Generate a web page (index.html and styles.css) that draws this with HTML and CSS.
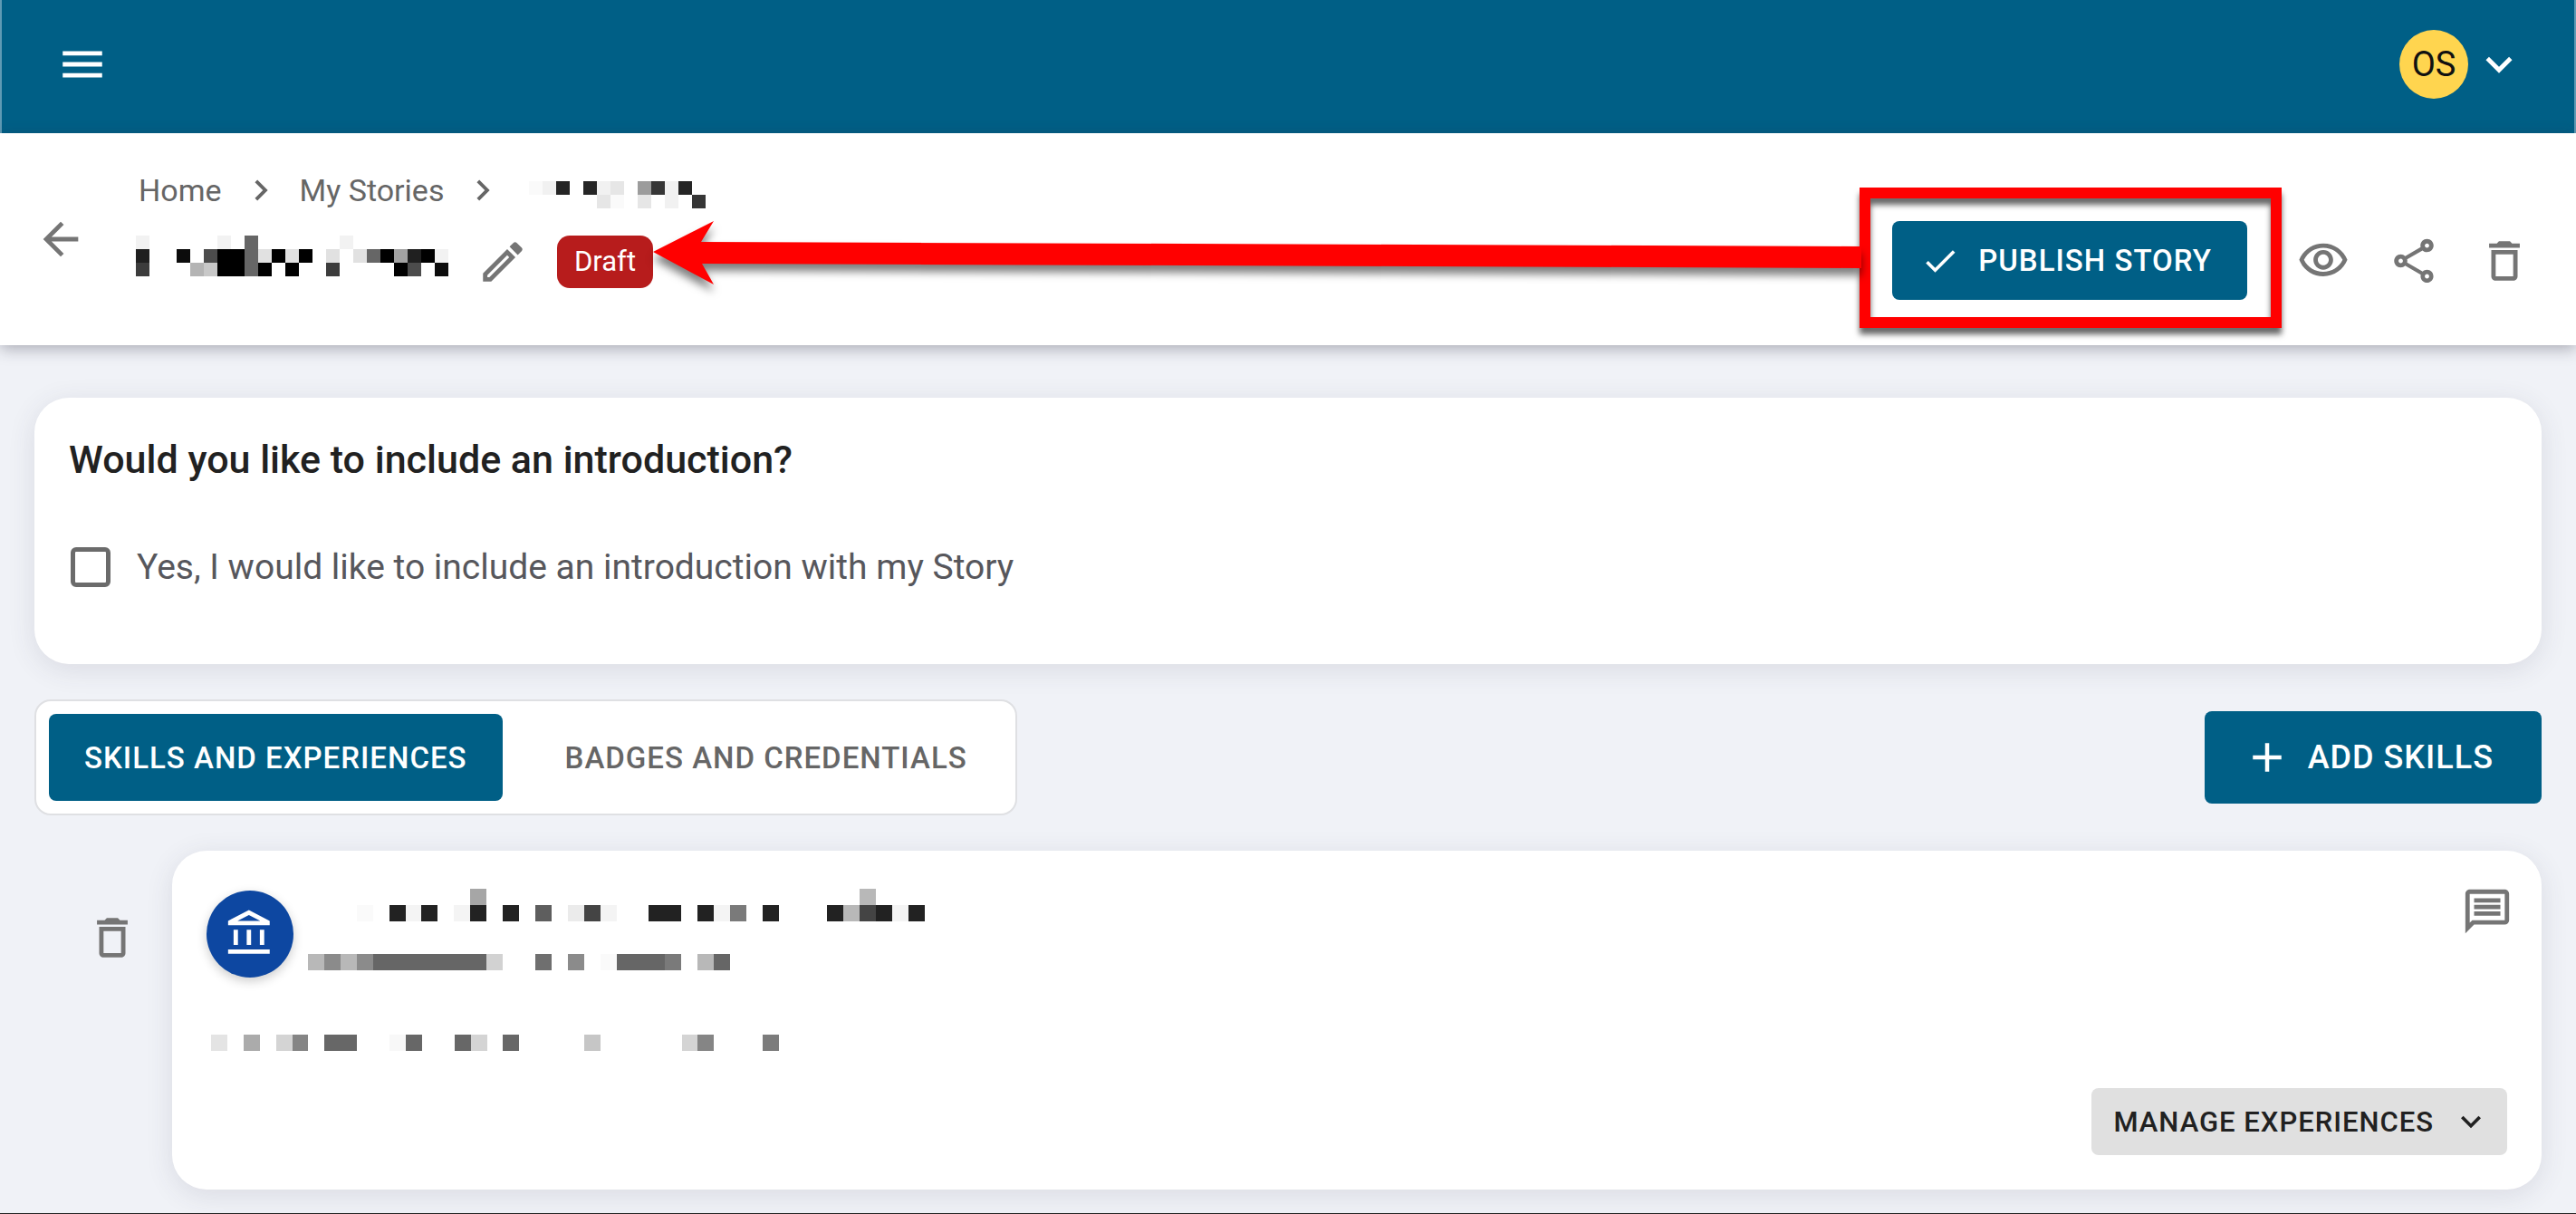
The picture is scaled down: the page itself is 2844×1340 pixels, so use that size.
FILE: index.html
```html
<!doctype html>
<html lang="en">
<head>
	<meta charset="utf-8"/>
	<title>My Stories</title>
	<link rel="stylesheet" href="styles.css">
</head>
<body>
<div class="page">
	<header class="topbar">
		<button class="icon-btn" aria-label="Menu">
			<svg class="icon" viewBox="0 0 24 24"><path d="M3 18h18v-2H3v2zm0-5h18v-2H3v2zm0-7v2h18V6H3z"/></svg>
		</button>
		<button class="account" aria-label="Account">
			<span class="avatar">OS</span>
			<svg class="icon" viewBox="0 0 24 24"><path d="M16.59 8.59 12 13.17 7.41 8.59 6 10l6 6 6-6z"/></svg>
		</button>
	</header>

	<section class="toolbar">
		<button class="icon-btn" aria-label="Back">
			<svg class="icon" viewBox="0 0 24 24"><path d="M20 11H7.83l5.59-5.59L12 4l-8 8 8 8 1.41-1.41L7.83 13H20v-2z"/></svg>
		</button>
		<div class="heading">
			<nav class="crumbs">
				<a href="#">Home</a>
				<svg class="icon-crumb" viewBox="0 0 24 24"><path d="M10 6 8.59 7.41 13.17 12l-4.58 4.59L10 18l6-6z"/></svg>
				<a href="#">My Stories</a>
				<svg class="icon-crumb" viewBox="0 0 24 24"><path d="M10 6 8.59 7.41 13.17 12l-4.58 4.59L10 18l6-6z"/></svg>
				<svg class="hidden-crumb" viewBox="0 0 13 2" shape-rendering="crispEdges">
					<path fill="#fafafa" d="M0 0h1v1H0zM6 1h1v1H6z"/>
					<path fill="#f1f1f1" d="M1 0h1v1H1zM5 0h1v1H5zM10 0h1v1h-1zM10 1h1v1h-1z"/>
					<path fill="#e6e6e6" d="M6 0h1v1H6zM5 1h1v1H5zM8 1h1v1H8z"/>
					<path fill="#9c9c9c" d="M8 0h1v1H8z"/>
					<path fill="#363636" d="M9 0h1v1H9zM12 1h1v1h-1z"/>
					<path fill="#252525" d="M2 0h1v1H2zM4 0h1v1H4zM11 0h1v1h-1z"/>
				</svg>
			</nav>
			<div class="title-row">
				<svg class="hidden-title" viewBox="0 0 23 3" shape-rendering="crispEdges">
					<path fill="#f2f2f2" d="M0 0h1v1H0zM6 0h1v1H6zM15 0h1v1h-1zM22 1h1v1h-1z"/>
					<path fill="#e1e1e1" d="M9 1h1v1H9zM11 1h1v1h-1zM14 1h1v1h-1zM16 1h1v1h-1z"/>
					<path fill="#c8c8c8" d="M5 2h1v1H5z"/>
					<path fill="#b4b4b4" d="M4 2h1v1H4z"/>
					<path fill="#a2a2a2" d="M19 1h1v1h-1z"/>
					<path fill="#666" d="M8 0h1v3H8zM17 1h1v1h-1z"/>
					<path fill="#4c4c4c" d="M5 1h1v1H5zM20 2h1v1h-1z"/>
					<path fill="#3c3c3c" d="M0 2h1v1H0zM14 2h1v1h-1z"/>
					<path fill="#202020" d="M0 1h1v1H0zM20 1h1v1h-1z"/>
					<path fill="#0c0c0c" d="M3 1h1v1H3zM22 2h1v1h-1z"/>
					<path fill="#000" d="M6 1h2v2H6zM10 1h1v1h-1zM12 1h1v1h-1zM9 2h1v1H9zM11 2h1v1h-1zM18 1h1v1h-1zM21 1h1v1h-1zM19 2h1v1h-1z"/>
				</svg>
				<button class="icon-btn" aria-label="Edit title">
					<svg class="icon" viewBox="0 0 24 24"><path d="M3 17.25V21h3.75L17.81 9.94l-3.75-3.75L3 17.25zM5.92 19H5v-.92l9.06-9.06.92.92L5.92 19zM20.71 5.63l-2.34-2.34c-.2-.2-.45-.29-.71-.29s-.51.1-.7.29l-1.83 1.83 3.75 3.75 1.83-1.83c.39-.39.39-1.02 0-1.41z"/></svg>
				</button>
				<span class="badge">Draft</span>
			</div>
		</div>
		<div class="actions">
			<div class="publish">
				<button class="btn btn-publish">
					<svg class="icon-small" viewBox="0 0 24 24"><path d="M9 16.17 4.83 12l-1.42 1.41L9 19 21 7l-1.41-1.41z"/></svg>
					PUBLISH STORY
				</button>
				<div class="frame"></div>
				<svg class="arrow" viewBox="0 0 1334 70"><path fill="#f00" d="M0 34 67 0 53 23 1334 28V52L54 47 67 70z"/></svg>
			</div>
			<button class="icon-btn" aria-label="Preview">
				<svg class="icon" viewBox="0 0 24 24"><path d="M12 6c3.79 0 7.17 2.13 8.82 5.5C19.17 14.87 15.79 17 12 17s-7.17-2.13-8.82-5.5C4.83 8.13 8.21 6 12 6m0-2C7 4 2.73 7.11 1 11.5 2.73 15.89 7 19 12 19s9.27-3.11 11-7.5C21.27 7.11 17 4 12 4zm0 5c1.38 0 2.5 1.12 2.5 2.5S13.38 14 12 14s-2.5-1.12-2.5-2.5S10.62 9 12 9m0-2c-2.48 0-4.5 2.02-4.5 4.5S9.52 16 12 16s4.5-2.02 4.5-4.5S14.48 7 12 7z"/></svg>
			</button>
			<button class="icon-btn" aria-label="Share">
				<svg class="icon" viewBox="0 0 24 24"><path d="M18 16.08c-.76 0-1.44.3-1.96.77L8.91 12.7c.05-.23.09-.46.09-.7s-.04-.47-.09-.7l7.05-4.11c.54.5 1.25.81 2.04.81 1.66 0 3-1.34 3-3s-1.34-3-3-3-3 1.34-3 3c0 .24.04.47.09.7L8.04 9.81C7.5 9.31 6.79 9 6 9c-1.66 0-3 1.34-3 3s1.34 3 3 3c.79 0 1.5-.31 2.04-.81l7.12 4.16c-.05.21-.08.43-.08.65 0 1.61 1.31 2.92 2.92 2.92s2.92-1.31 2.92-2.92-1.31-2.92-2.92-2.92zM18 4c.55 0 1 .45 1 1s-.45 1-1 1-1-.45-1-1 .45-1 1-1zM6 13c-.55 0-1-.45-1-1s.45-1 1-1 1 .45 1 1-.45 1-1 1zm12 7.02c-.55 0-1-.45-1-1s.45-1 1-1 1 .45 1 1-.45 1-1 1z"/></svg>
			</button>
			<button class="icon-btn" aria-label="Delete story">
				<svg class="icon" viewBox="0 0 24 24"><path d="M6 19c0 1.1.9 2 2 2h8c1.1 0 2-.9 2-2V7H6v12zM8 9h8v10H8V9zm7.5-5-1-1h-5l-1 1H5v2h14V4z"/></svg>
			</button>
		</div>
	</section>

	<main class="content">
		<section class="card intro">
			<h2>Would you like to include an introduction?</h2>
			<label class="check">
				<input type="checkbox">
				<span>Yes, I would like to include an introduction with my Story</span>
			</label>
		</section>

		<div class="tab-row">
			<div class="tabs">
				<button class="tab active">SKILLS AND EXPERIENCES</button>
				<button class="tab">BADGES AND CREDENTIALS</button>
			</div>
			<button class="btn btn-add">
				<svg class="icon-plus" viewBox="0 0 24 24"><path d="M19 13h-6v6h-2v-6H5v-2h6V5h2v6h6v2z"/></svg>
				ADD SKILLS
			</button>
		</div>

		<div class="skill-row">
			<button class="icon-btn" aria-label="Delete skill">
				<svg class="icon" viewBox="0 0 24 24"><path d="M6 19c0 1.1.9 2 2 2h8c1.1 0 2-.9 2-2V7H6v12zM8 9h8v10H8V9zm7.5-5-1-1h-5l-1 1H5v2h14V4z"/></svg>
			</button>
			<article class="card skill">
				<div class="skill-head">
					<span class="skill-icon">
						<svg class="icon" viewBox="0 0 24 24"><path d="M6.5 10h-2v7h2v-7zm6 0h-2v7h2v-7zm8.5 9H2v2h19v-2zm-2.5-9h-2v7h2v-7zm-7-6.74L16.71 6H6.29l5.21-2.74m0-2.26L2 6v2h19V6l-9.5-5z"/></svg>
					</span>
					<div class="skill-text">
						<svg class="hidden-name" viewBox="6 0 38 5" preserveAspectRatio="none" shape-rendering="crispEdges">
							<path fill="#f4f4f4" d="M12 1h1v1h-1zM15 1h1v1h-1zM24 1h1v1h-1zM31 1h1v1h-1zM42 1h1v1h-1z"/>
							<path fill="#fafafa" d="M9 1h1v1H9zM24 4h1v1h-1z"/>
							<path fill="#ebebeb" d="M22 1h1v1h-1z"/>
							<path fill="#d2d2d2" d="M17 4h1v1h-1z"/>
							<path fill="#b8b8b8" d="M40 0h1v1h-1zM39 1h1v1h-1zM6 4h1v1H6zM8 4h1v1H8zM30 4h1v1h-1z"/>
							<path fill="#a6a6a6" d="M16 0h1v1h-1z"/>
							<path fill="#8b8b8b" d="M7 4h1v1H7zM9 4h1v1H9zM22 4h1v1h-1z"/>
							<path fill="#7a7a7a" d="M32 1h1v1h-1zM28 4h1v1h-1z"/>
							<path fill="#6f6f6f" d="M20 4h1v1h-1z"/>
							<path fill="#666" d="M10 4h7v1h-7zM25 4h3v1h-3zM31 4h1v1h-1z"/>
							<path fill="#5e5e5e" d="M20 1h1v1h-1z"/>
							<path fill="#444" d="M23 1h1v1h-1zM40 1h1v1h-1z"/>
							<path fill="#222" d="M11 1h1v1h-1zM13 1h1v1h-1zM16 1h1v1h-1zM18 1h1v1h-1zM27 1h2v1h-2zM30 1h1v1h-1zM34 1h1v1h-1zM38 1h1v1h-1zM41 1h1v1h-1zM43 1h1v1h-1z"/>
						</svg>
					</div>
					<button class="icon-btn" aria-label="Comment">
						<svg class="icon" viewBox="0 0 24 24"><path d="M4 4h16v12H5.17L4 17.17V4m0-2c-1.1 0-1.99.9-1.99 2L2 22l4-4h14c1.1 0 2-.9 2-2V4c0-1.100-.9-2-2-2H4zm2 10h12v2H6v-2zm0-3h12v2H6V9zm0-3h12v2H6V6z"/></svg>
					</button>
				</div>
				<svg class="hidden-note" viewBox="0 0 35 1" preserveAspectRatio="none" shape-rendering="crispEdges">
					<path fill="#f8f8f8" d="M11 0h1v1h-1z"/>
					<path fill="#e4e4e4" d="M0 0h1v1H0z"/>
					<path fill="#d4d4d4" d="M4 0h1v1H4zM16 0h1v1h-1zM29 0h1v1h-1z"/>
					<path fill="#c6c6c6" d="M23 0h1v1h-1z"/>
					<path fill="#ababab" d="M2 0h1v1H2z"/>
					<path fill="#858585" d="M5 0h1v1H5zM30 0h1v1h-1z"/>
					<path fill="#7c7c7c" d="M34 0h1v1h-1z"/>
					<path fill="#676767" d="M7 0h2v1H7zM12 0h1v1h-1zM15 0h1v1h-1zM18 0h1v1h-1z"/>
				</svg>
				<button class="btn btn-manage">
					MANAGE EXPERIENCES
					<svg class="icon-small" viewBox="0 0 24 24"><path d="M16.59 8.59 12 13.17 7.41 8.59 6 10l6 6 6-6z"/></svg>
				</button>
			</article>
		</div>
	</main>
</div>
</body>
</html>
```
FILE: styles.css
```css
* {
	box-sizing: border-box;
}
body {
	margin: 0;
	background-color: #f0f2f7;
	font-family: Roboto, "Liberation Sans", sans-serif;
	color: #212121;
}
button {
	font-family: inherit;
	border: none;
	background: none;
	padding: 0;
	cursor: pointer;
}
svg {
	display: block;
	fill: currentColor;
	flex-shrink: 0;
}
.page {
	min-height: 100vh;
	border-bottom: 1px solid #222;
}
.icon {
	width: 58px;
	height: 58px;
}
.icon-small {
	width: 44px;
	height: 44px;
}
.icon-crumb {
	width: 46px;
	height: 46px;
}
.icon-plus {
	width: 54px;
	height: 54px;
}
.icon-btn {
	color: #757575;
	flex-shrink: 0;
}

/* top bar */
.topbar {
	display: flex;
	justify-content: space-between;
	align-items: center;
	height: 147px;
	padding: 0 54px 6px 60px;
	background-color: #005f86;
	border: 0 solid #5f9ab4;
	border-width: 0 2px;
}
.topbar .icon-btn,
.account {
	color: white;
}
.account {
	display: flex;
	align-items: center;
	gap: 5px;
}
.avatar {
	width: 76px;
	height: 76px;
	border-radius: 50%;
	background-color: #ffd54f;
	color: #111;
	font-size: 38px;
	line-height: 76px;
	text-align: center;
}

/* story toolbar */
.toolbar {
	position: relative;
	display: flex;
	align-items: center;
	padding: 0 50px 0 38px;
	background-color: white;
	box-shadow: 0 4px 16px rgba(40, 40, 60, 0.35);
}
.heading {
	flex: 1;
	padding: 43px 0 63px 54px;
}
.crumbs {
	display: flex;
	align-items: center;
	gap: 20px;
	height: 40px;
	margin-bottom: 30px;
	padding-left: 3px;
	font-size: 34px;
}
.crumbs a {
	color: #666;
	text-decoration: none;
}
.icon-crumb {
	color: #666;
}
.hidden-crumb {
	width: 195px;
	height: 30px;
	margin: 10px 0 0 8px;
}
.title-row {
	display: flex;
	align-items: center;
	gap: 31px;
}
.hidden-title {
	width: 345px;
	height: 45px;
	align-self: flex-start;
}
.badge {
	padding: 0 19px;
	border-radius: 14px;
	background-color: #b71c1c;
	color: white;
	font-size: 31px;
	line-height: 58px;
}
.actions {
	display: flex;
	align-items: center;
	align-self: flex-end;
	gap: 42px;
	margin-bottom: 50px;
}
.publish {
	position: relative;
	margin-right: 13px;
}
.btn {
	display: flex;
	align-items: center;
	border-radius: 8px;
	background-color: #005f86;
	color: white;
	font-weight: 500;
	letter-spacing: 1px;
}
.btn-publish {
	gap: 20px;
	height: 87px;
	padding: 0 39px 0 31px;
	font-size: 33px;
}
/* callout frame and arrow over the publish button */
.frame {
	position: absolute;
	inset: -37px -38px -31px -36px;
	border: 12px solid #f00;
	filter: drop-shadow(0 7px 3px rgba(0, 0, 0, 0.6));
	pointer-events: none;
}
.arrow {
	position: absolute;
	right: calc(100% + 34px);
	top: 0;
	width: 1334px;
	height: 70px;
	overflow: visible;
	filter: drop-shadow(0 8px 5px rgba(0, 0, 0, 0.5));
	pointer-events: none;
}

/* content */
.content {
	padding: 58px 38px 24px;
}
.card {
	border-radius: 38px;
	background-color: white;
	box-shadow: 0 6px 30px rgba(60, 60, 80, 0.12);
}
.intro {
	padding: 43px 38px 78px;
}
.intro h2 {
	margin: 0 0 65px;
	font-size: 43px;
	font-weight: 500;
	line-height: 50px;
}
.check {
	display: flex;
	align-items: center;
	gap: 29px;
	height: 58px;
	color: #57575c;
	font-size: 39px;
}
.check input {
	appearance: none;
	width: 44px;
	height: 44px;
	margin: 0 0 0 2px;
	border: 5px solid #6b6b6b;
	border-radius: 6px;
}
.tab-row {
	display: flex;
	justify-content: space-between;
	align-items: center;
	margin: 39px 0;
}
.tabs {
	display: flex;
	gap: 30px;
	padding: 14px;
	border: 2px solid #dfe0e3;
	border-radius: 18px;
	background-color: white;
}
.tab {
	height: 96px;
	padding: 0 39px;
	border-radius: 8px;
	color: #666;
	font-size: 33px;
	font-weight: 500;
	letter-spacing: 1px;
}
.tab.active {
	background-color: #005f86;
	color: white;
}
.btn-add {
	gap: 18px;
	height: 102px;
	padding: 0 53px 0 42px;
	font-size: 36px;
}
.skill-row {
	display: flex;
	align-items: flex-start;
}
.skill-row > .icon-btn {
	padding: 67px 37px 0 57px;
}
.skill {
	flex: 1;
	padding: 38px;
}
.skill-head {
	display: flex;
	align-items: flex-start;
}
.skill-head .icon-btn {
	margin-right: -7px;
}
.skill-icon {
	display: flex;
	align-items: center;
	justify-content: center;
	width: 96px;
	height: 96px;
	margin-top: 6px;
	border-radius: 50%;
	background-color: #0d47a1;
	color: white;
	box-shadow: 0 4px 12px rgba(0, 0, 0, 0.2);
}
.skill-text {
	flex: 1;
	padding: 4px 0 0 16px;
}
.hidden-name {
	width: 681px;
	height: 90px;
}
.hidden-note {
	width: 627px;
	height: 18px;
	margin: 63px 0 41px 5px;
}
.btn-manage {
	gap: 19px;
	height: 74px;
	margin-left: auto;
	padding: 0 18px 0 24px;
	background-color: #e0e0e0;
	color: #212121;
	font-size: 31px;
}
```
